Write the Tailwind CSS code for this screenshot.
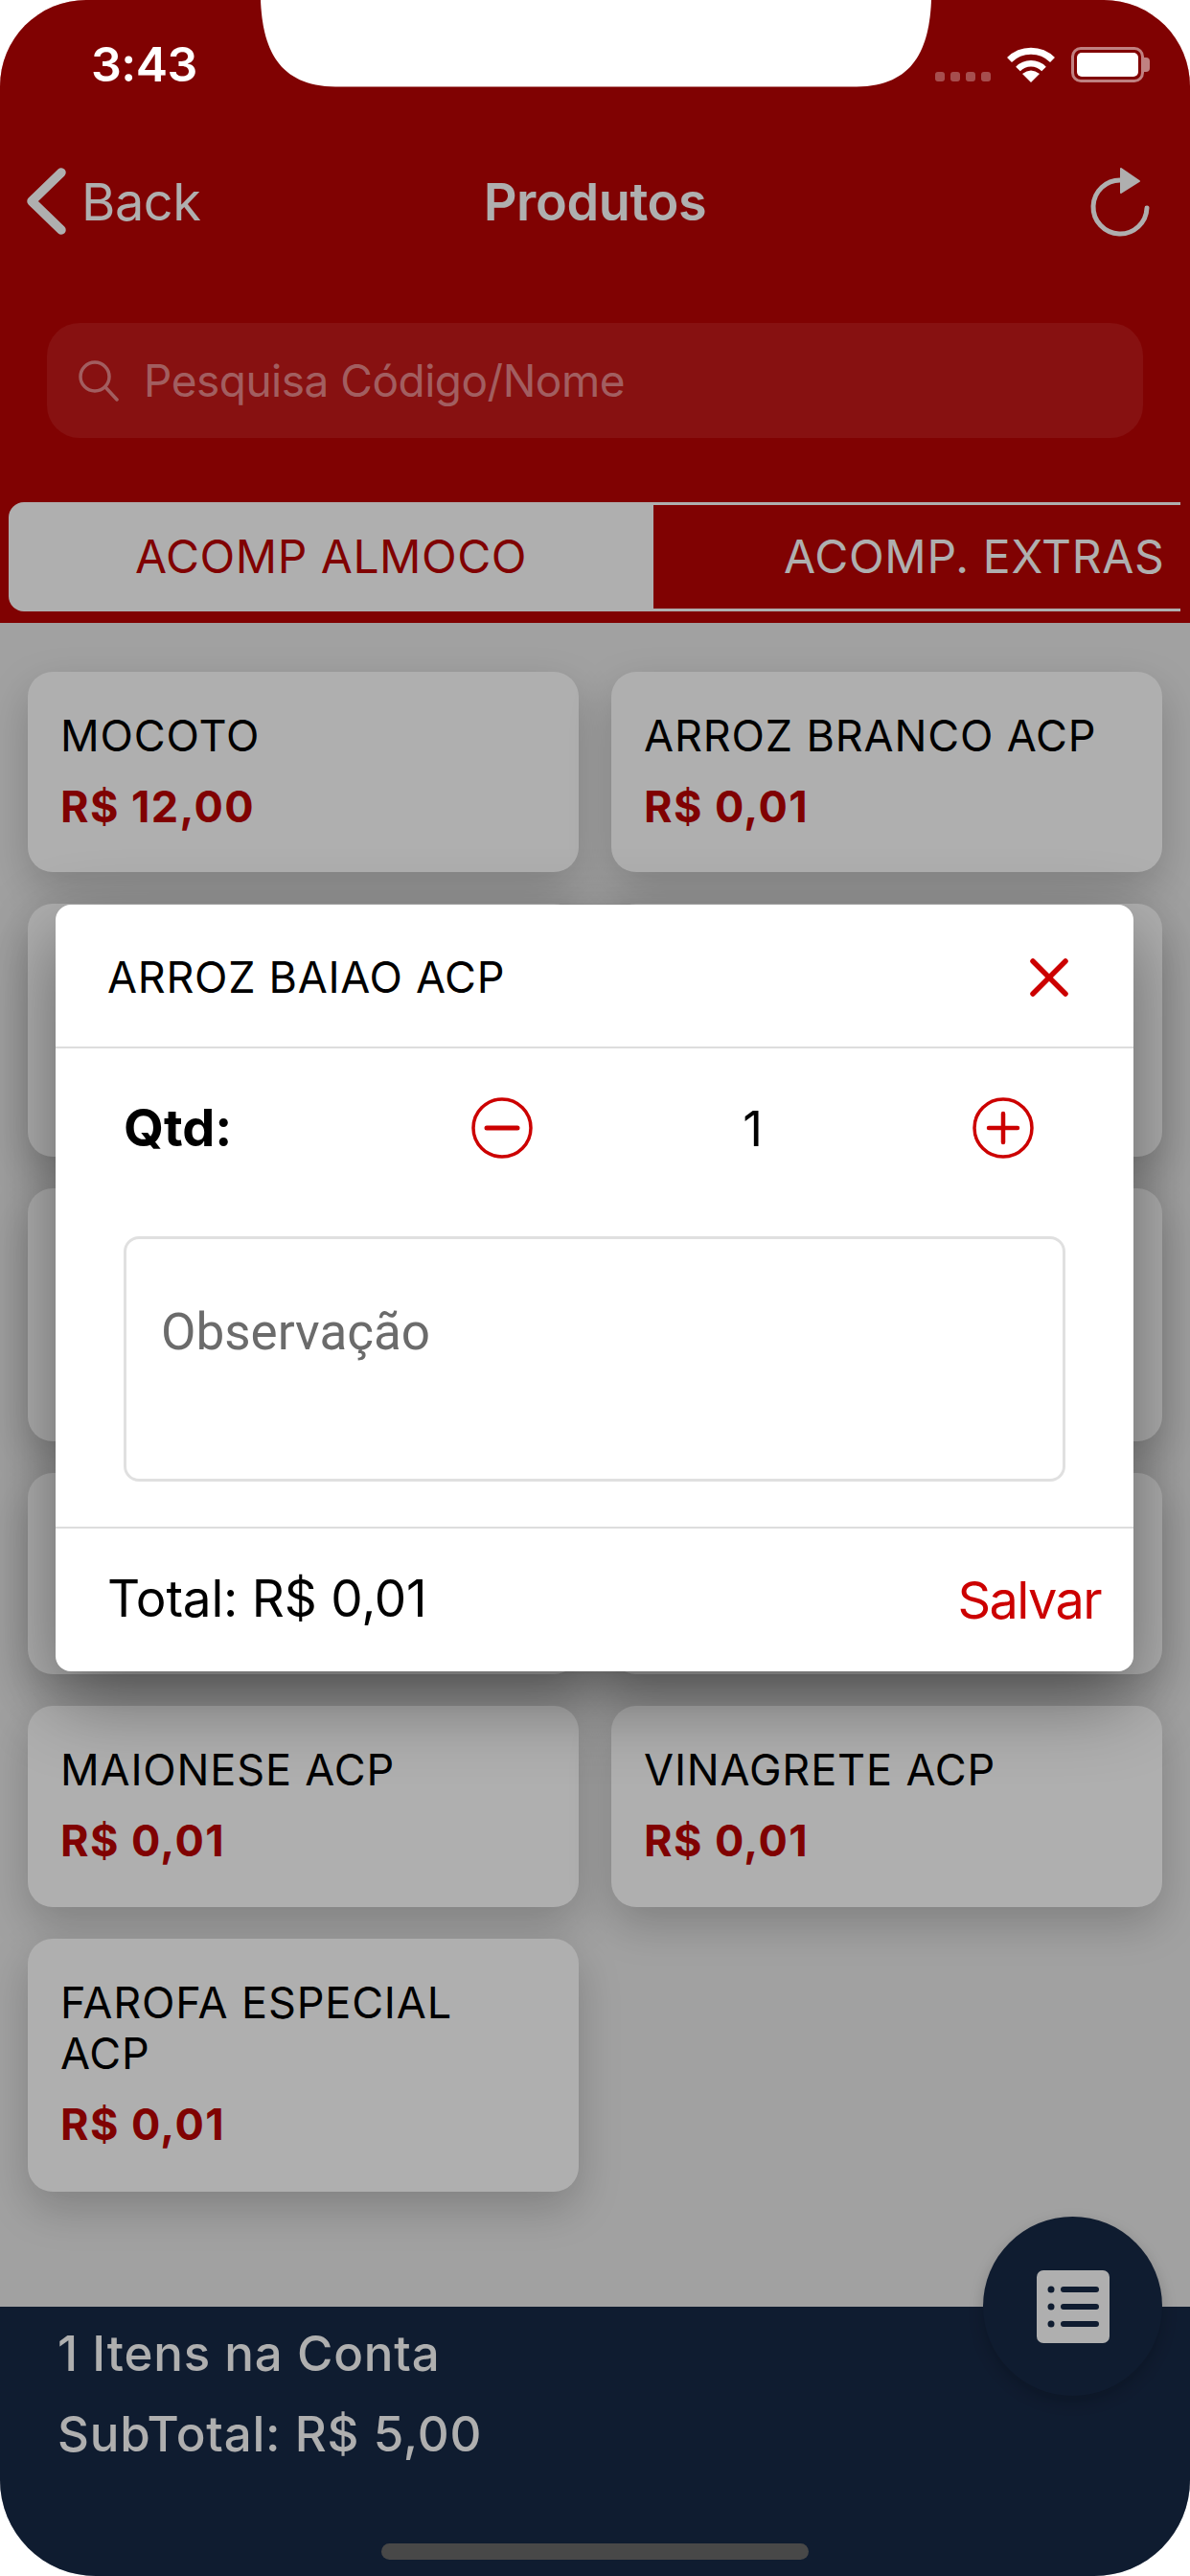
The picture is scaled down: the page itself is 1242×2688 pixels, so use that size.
<!DOCTYPE html>
<html lang="pt-BR">
<head>
    <meta charset="UTF-8">
    <meta name="viewport" content="width=device-width, initial-scale=1.0">
    <title>Produtos</title>
    <script src="https://cdn.jsdelivr.net/npm/@tailwindcss/browser@4"></script>
</head>
<body class="bg-white [font-family:Inter,sans-serif]">
    <div class="relative w-[1242px] h-[2688px] overflow-hidden bg-white">
        <!-- phone screen -->
        <div class="relative w-full h-full flex flex-col overflow-hidden rounded-t-[90px] rounded-b-[100px] bg-[#ebebeb]">

            <!-- header -->
            <header class="h-[650px] shrink-0 bg-[#bb0404]">
                <div class="relative z-20 h-[134px] flex items-center text-white">
                    <span class="ml-[95px] text-[50px] font-semibold tracking-[-0.5px]">3:43</span>
                    <div class="ml-auto mr-[48px] flex items-center">
                        <div class="flex gap-[6px] mt-[26px] mr-[17px]">
                            <span class="w-[10px] h-[10px] rounded-[3px] bg-white/30"></span>
                            <span class="w-[10px] h-[10px] rounded-[3px] bg-white/30"></span>
                            <span class="w-[10px] h-[10px] rounded-[3px] bg-white/30"></span>
                            <span class="w-[10px] h-[10px] rounded-[3px] bg-white/30"></span>
                        </div>
                        <svg class="w-[50px] h-[38px] mr-[17px]" viewBox="0 0 50 38" fill="none">
                            <path d="M2.5 14.5A32 32 0 0 1 47.5 14.5" stroke="white" stroke-width="7"/>
                            <path d="M11.5 24A19 19 0 0 1 38.5 24" stroke="white" stroke-width="6.5"/>
                            <path d="M25 38L16 29Q25 22 34 29Z" fill="white"/>
                        </svg>
                        <div class="relative w-[76px] h-[37px] rounded-[10px] border-[3px] border-white/50 p-[3px]">
                            <div class="w-full h-full rounded-[5px] bg-white"></div>
                            <span class="absolute left-[73px] top-[8px] w-[6px] h-[15px] rounded-r-[4px] bg-white/50"></span>
                        </div>
                    </div>
                </div>

                <div class="h-[152px] grid grid-cols-[1fr_auto_1fr] items-center text-white">
                    <div class="flex items-center pl-[28px]">
                        <svg class="w-[42px] h-[72px] mr-[15px]" viewBox="0 0 42 72" fill="none">
                            <path d="M36 6L5 36L36 66" stroke="white" stroke-width="9.5" stroke-linecap="round" stroke-linejoin="round"/>
                        </svg>
                        <span class="text-[54px] tracking-[-0.4px]">Back</span>
                    </div>
                    <h1 class="text-[54px] font-semibold tracking-[-0.4px]">Produtos</h1>
                    <div class="flex justify-end pr-[41px]">
                        <svg class="w-[64px] h-[76px]" viewBox="0 0 64 76" fill="none">
                            <path d="M33 16A28 28 0 1 0 60 45" stroke="white" stroke-width="5" stroke-linecap="round"/>
                            <path d="M33 4L52 17L33 29Z" fill="white" stroke="white" stroke-width="2" stroke-linejoin="round"/>
                        </svg>
                    </div>
                </div>

                <div class="mt-[51px] mx-[49px] h-[120px] flex items-center rounded-[34px] bg-[#c51919]">
                    <svg class="ml-[32px] w-[44px] h-[44px]" viewBox="0 0 44 44" fill="none">
                        <circle cx="18" cy="18" r="15" stroke="#ec8a8c" stroke-width="3.5"/>
                        <path d="M29 29L41 42" stroke="#ec8a8c" stroke-width="3.5" stroke-linecap="round"/>
                    </svg>
                    <span class="ml-[25px] text-[46px] tracking-[-0.5px] text-[#ec8a8c]">Pesquisa Código/Nome</span>
                </div>

                <div class="mt-[67px] ml-[9px] w-[1223px] h-[114px] flex">
                    <div class="w-[673px] flex items-center justify-center rounded-l-[16px] bg-white text-[48px] tracking-[0.5px] text-[#bb0404]">ACOMP ALMOCO</div>
                    <div class="flex-1 flex items-center pl-[136px] border-y-[3px] border-white text-[48px] tracking-[0.7px] text-white whitespace-nowrap">ACOMP. EXTRAS</div>
                </div>
            </header>

            <!-- product list -->
            <main class="flex-1 px-[29px] pt-[51px]">
                <div class="grid grid-cols-2 gap-x-[34px] gap-y-[33px] text-[45px] leading-[53px]">
                    <div class="h-[209px] rounded-[26px] bg-white pt-[40px] px-[34px] shadow-[0_18px_46px_rgba(0,0,0,0.2)]">
                        <p class="tracking-[0.85px] text-black">MOCOTO</p>
                        <p class="mt-[21px] font-bold tracking-[1.4px] text-[#bb0404]">R$ 12,00</p>
                    </div>
                    <div class="h-[209px] rounded-[26px] bg-white pt-[40px] px-[34px] shadow-[0_18px_46px_rgba(0,0,0,0.2)]">
                        <p class="tracking-[0.85px] text-black">ARROZ BRANCO ACP</p>
                        <p class="mt-[21px] font-bold tracking-[1.4px] text-[#bb0404]">R$ 0,01</p>
                    </div>
                    <div class="h-[264px] rounded-[26px] bg-white shadow-[0_18px_46px_rgba(0,0,0,0.2)]"></div>
                    <div class="h-[264px] rounded-[26px] bg-white shadow-[0_18px_46px_rgba(0,0,0,0.2)]"></div>
                    <div class="h-[264px] rounded-[26px] bg-white shadow-[0_18px_46px_rgba(0,0,0,0.2)]"></div>
                    <div class="h-[264px] rounded-[26px] bg-white shadow-[0_18px_46px_rgba(0,0,0,0.2)]"></div>
                    <div class="h-[210px] rounded-[26px] bg-white shadow-[0_18px_46px_rgba(0,0,0,0.2)]"></div>
                    <div class="h-[210px] rounded-[26px] bg-white shadow-[0_18px_46px_rgba(0,0,0,0.2)]"></div>
                    <div class="h-[210px] rounded-[26px] bg-white pt-[40px] px-[34px] shadow-[0_18px_46px_rgba(0,0,0,0.2)]">
                        <p class="tracking-[0.85px] text-black">MAIONESE ACP</p>
                        <p class="mt-[21px] font-bold tracking-[1.4px] text-[#bb0404]">R$ 0,01</p>
                    </div>
                    <div class="h-[210px] rounded-[26px] bg-white pt-[40px] px-[34px] shadow-[0_18px_46px_rgba(0,0,0,0.2)]">
                        <p class="tracking-[0.85px] text-black">VINAGRETE ACP</p>
                        <p class="mt-[21px] font-bold tracking-[1.4px] text-[#bb0404]">R$ 0,01</p>
                    </div>
                    <div class="h-[264px] rounded-[26px] bg-white pt-[40px] px-[34px] shadow-[0_18px_46px_rgba(0,0,0,0.2)]">
                        <p class="tracking-[0.85px] text-black">FAROFA ESPECIAL<br>ACP</p>
                        <p class="mt-[21px] font-bold tracking-[1.4px] text-[#bb0404]">R$ 0,01</p>
                    </div>
                </div>
            </main>

            <!-- account footer -->
            <footer class="h-[281px] shrink-0 bg-[#172946] pl-[60px] pt-[19px] text-[51px] font-medium tracking-[0.8px] leading-[60px] text-white">
                <p>1 Itens na Conta</p>
                <p class="mt-[24px]">SubTotal: R$ 5,00</p>
            </footer>

            <!-- floating button -->
            <button class="absolute left-[1026px] top-[2313px] w-[187px] h-[187px] flex items-center justify-center rounded-full bg-[#172946] shadow-[0_6px_16px_rgba(0,0,0,0.2)]">
                <svg class="w-[76px] h-[76px]" viewBox="0 0 76 76">
                    <rect width="76" height="76" rx="7" fill="white"/>
                    <circle cx="15" cy="20" r="3.5" fill="#172946"/>
                    <circle cx="15" cy="38" r="3.5" fill="#172946"/>
                    <circle cx="15" cy="56" r="3.5" fill="#172946"/>
                    <path d="M28 20H62M28 38H62M28 56H62" stroke="#172946" stroke-width="6" stroke-linecap="round"/>
                </svg>
            </button>

            <!-- dim layer behind the dialog -->
            <div class="absolute inset-0 z-10 bg-black/[0.314]"></div>

            <!-- dialog -->
            <section class="absolute z-20 left-[58px] top-[944px] w-[1125px] h-[800px] rounded-[16px] bg-white shadow-[0_30px_80px_rgba(0,0,0,0.42)]">
                <div class="h-[150px] flex items-center justify-between pl-[54px] pr-[68px] pt-[3px] border-b-2 border-[#dddddd]">
                    <h2 class="text-[45px] tracking-[0.7px] text-black">ARROZ BAIAO ACP</h2>
                    <svg class="w-[40px] h-[40px]" viewBox="0 0 40 40" fill="none">
                        <path d="M3 3L37 37M37 3L3 37" stroke="#cc0000" stroke-width="5.5" stroke-linecap="round"/>
                    </svg>
                </div>
                <div class="flex items-center pl-[71px] pt-[51px] mb-[81px] leading-none">
                    <span class="w-[363px] text-[54px] font-bold text-black">Qtd:</span>
                    <svg class="w-[64px] h-[64px]" viewBox="0 0 64 64" fill="none">
                        <circle cx="32" cy="32" r="30" stroke="#cc0000" stroke-width="3.5"/>
                        <path d="M16 32H48" stroke="#cc0000" stroke-width="5" stroke-linecap="round"/>
                    </svg>
                    <span class="w-[459px] text-center text-[51px] text-black">1</span>
                    <svg class="w-[64px] h-[64px]" viewBox="0 0 64 64" fill="none">
                        <circle cx="32" cy="32" r="30" stroke="#cc0000" stroke-width="3.5"/>
                        <path d="M17 32H47M32 17V47" stroke="#cc0000" stroke-width="4.5" stroke-linecap="round"/>
                    </svg>
                </div>
                <textarea placeholder="Observação" class="block ml-[71px] w-[983px] h-[256px] resize-none rounded-[16px] border-[3px] border-[#e0e0e0] pl-[36px] pt-[67px] [font-family:Roboto,sans-serif] text-[53px] leading-[60px] outline-none placeholder:text-[#6b6b6b]"></textarea>
                <div class="mt-[47px] h-[150px] flex items-center justify-between pl-[54px] pr-[34px] border-t-2 border-[#dddddd]">
                    <span class="text-[53px] tracking-[-0.2px] text-black">Total: R$ 0,01</span>
                    <span class="text-[54px] tracking-[-1.6px] text-[#cc0000]">Salvar</span>
                </div>
            </section>

            <!-- home indicator -->
            <div class="absolute z-20 left-[398px] top-[2654px] w-[446px] h-[17px] rounded-full bg-[#484848]"></div>
        </div>

        <!-- notch -->
        <svg class="absolute z-30 left-[272px] top-0 w-[700px] h-[91px]" viewBox="0 0 700 91">
            <path d="M0 0H700C698 50 682 90 622 90.5H78C18 90 2 50 0 0Z" fill="white"/>
        </svg>
    </div>
</body>
</html>
